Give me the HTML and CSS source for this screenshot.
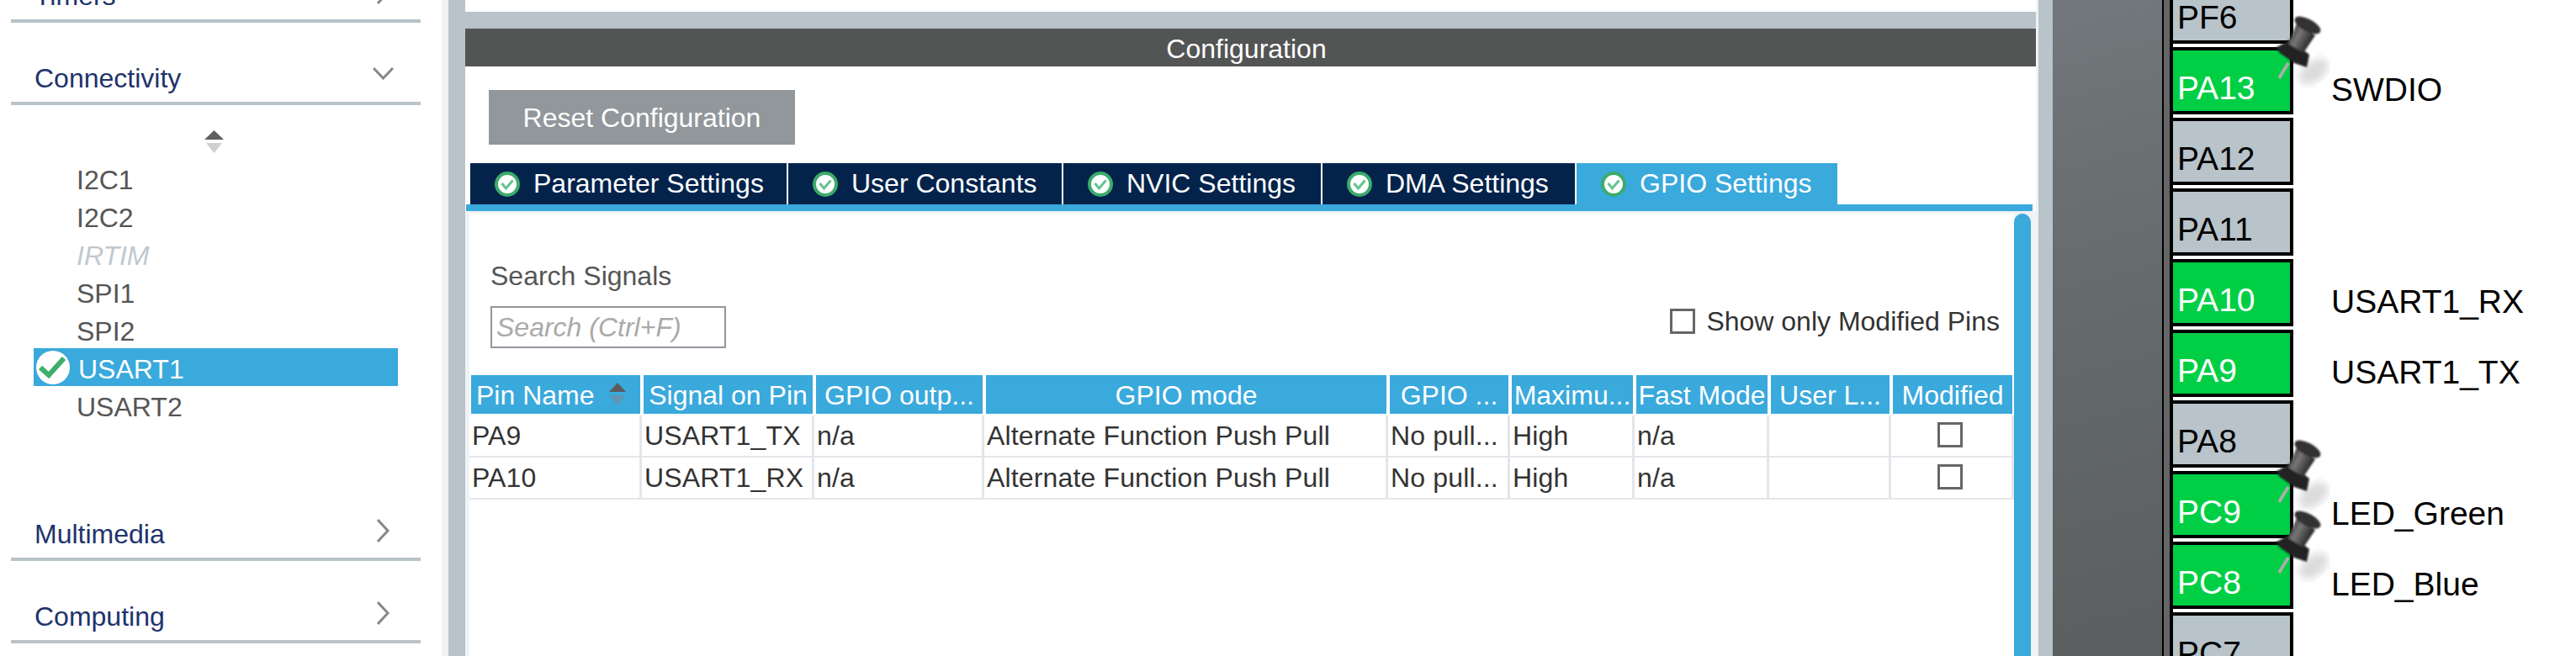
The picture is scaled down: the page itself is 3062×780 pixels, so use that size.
FILE: index.html
```html
<!DOCTYPE html>
<html lang="en">
<head>
  <meta charset="UTF-8">
  <title>Pinout and Configuration</title>
  <link rel="stylesheet" href="styles.css">
</head>
<body>
  <svg class="defs" width="0" height="0">
    <defs>
      <filter id="soft"><feGaussianBlur stdDeviation="1.3"/></filter>
      <filter id="softer"><feGaussianBlur stdDeviation="5"/></filter>
      <linearGradient id="pinShine" x1="0" y1="0" x2="1" y2="0.6">
        <stop offset="0" stop-color="#1c1c1c"/>
        <stop offset="0.45" stop-color="#777"/>
        <stop offset="1" stop-color="#161616"/>
      </linearGradient>
      <symbol id="pushpin" viewBox="0 0 70 90">
        <ellipse cx="50" cy="70" rx="20" ry="12" transform="rotate(-38 50 70)" fill="#cfcfcf" opacity="0.75" filter="url(#softer)"/>
        <path d="M20 60 L9 78" stroke="#a9aeaa" stroke-width="4"/>
        <g filter="url(#soft)">
          <path d="M5 42 L22 32 L45 50 L42 65 L27 60 L10 48 Z" fill="#232323"/>
          <path d="M30 13 L52 27 L38 48 L20 37 Z" fill="url(#pinShine)"/>
          <ellipse cx="43" cy="15" rx="17" ry="7.5" transform="rotate(28 43 15)" fill="#333"/>
        </g>
      </symbol>
      <symbol id="tabCheck" viewBox="0 0 30 30">
        <circle cx="15" cy="15" r="13" fill="#fff" stroke="#3dab6b" stroke-width="4"/>
        <path d="M8.5 14 L13.5 20 L21.5 10.5" fill="none" stroke="#63c391" stroke-width="3"/>
      </symbol>
      <symbol id="doneCheck" viewBox="0 0 40 40">
        <circle cx="20" cy="20" r="20" fill="#fff"/>
        <path d="M5 20 L15 29 L33 9" fill="none" stroke="#3fae6a" stroke-width="6"/>
      </symbol>
    </defs>
  </svg>

  <aside class="sidebar">
    <div class="section section-first"><span>Timers</span><svg class="chev-right" width="15" height="28"><path d="M1 1 L13 14 L1 27"/></svg></div>
    <div class="section"><span>Connectivity</span><svg class="chev-down" width="25" height="15"><path d="M1 1 L12.5 13 L24 1"/></svg></div>
    <svg class="sort-list" width="23" height="27">
      <polygon points="11.5,0 23,11 0,11" fill="#5f5f5f"/>
      <polygon points="2,15 21,15 11.5,27" fill="#cfcfcf"/>
    </svg>
    <ul class="periph-list">
      <li>I2C1</li>
      <li>I2C2</li>
      <li class="disabled">IRTIM</li>
      <li>SPI1</li>
      <li>SPI2</li>
      <li class="selected"><svg class="done" width="40" height="40"><use href="#doneCheck"/></svg>USART1</li>
      <li>USART2</li>
    </ul>
    <div class="section section-gap"><span>Multimedia</span><svg class="chev-right" width="15" height="28"><path d="M1 1 L13 14 L1 27"/></svg></div>
    <div class="section"><span>Computing</span><svg class="chev-right" width="15" height="28"><path d="M1 1 L13 14 L1 27"/></svg></div>
  </aside>
  <div class="gutter"></div>

  <main class="main">
    <div class="top-band"></div>
    <div class="title-bar">Configuration</div>
    <button class="reset-btn">Reset Configuration</button>

    <div class="tabs">
      <div class="tab"><svg width="30" height="30"><use href="#tabCheck"/></svg>Parameter Settings</div>
      <div class="tab"><svg width="30" height="30"><use href="#tabCheck"/></svg>User Constants</div>
      <div class="tab"><svg width="30" height="30"><use href="#tabCheck"/></svg>NVIC Settings</div>
      <div class="tab"><svg width="30" height="30"><use href="#tabCheck"/></svg>DMA Settings</div>
      <div class="tab active"><svg width="30" height="30"><use href="#tabCheck"/></svg>GPIO Settings</div>
    </div>
    <div class="tab-line"></div>

    <div class="panel">
      <div class="content">
        <div class="filters">
          <div class="search">
            <div class="search-label">Search Signals</div>
            <input class="search-input" type="text" placeholder="Search (Ctrl+F)">
          </div>
          <label class="only-modified"><span class="check"></span>Show only Modified Pins</label>
        </div>

        <table class="pin-table">
          <thead>
            <tr>
              <th class="w-pin left"><div class="th-in">Pin Name<svg class="sort-head" width="20" height="27"><polygon points="10,0 20,11 0,11" fill="#5c5c5c"/><polygon points="1,15 19,15 10,27" fill="#5f94b3"/></svg></div></th>
              <th class="w-signal">Signal on Pin</th>
              <th class="w-output">GPIO outp...</th>
              <th class="w-mode">GPIO mode</th>
              <th class="w-pull">GPIO ...</th>
              <th class="w-max">Maximu...</th>
              <th class="w-fast">Fast Mode</th>
              <th class="w-user">User L...</th>
              <th class="w-mod">Modified</th>
            </tr>
          </thead>
          <tbody>
            <tr>
              <td>PA9</td><td>USART1_TX</td><td>n/a</td><td>Alternate Function Push Pull</td><td>No pull...</td><td>High</td><td>n/a</td><td></td>
              <td class="cell-check"><span class="check"></span></td>
            </tr>
            <tr>
              <td>PA10</td><td>USART1_RX</td><td>n/a</td><td>Alternate Function Push Pull</td><td>No pull...</td><td>High</td><td>n/a</td><td></td>
              <td class="cell-check"><span class="check"></span></td>
            </tr>
          </tbody>
        </table>
      </div>
      <div class="scrollbar"></div>
    </div>
  </main>

  <div class="divider"></div>
  <div class="chip-rim"></div>
  <div class="chip">
    <div class="chip-face"></div>
    <div class="chip-edge"></div>
  </div>

  <div class="pins">
    <div class="pin-row"><div class="pin">PF6</div></div>
    <div class="pin-row"><div class="pin on">PA13</div><div class="pin-label">SWDIO</div><svg class="pushpin" width="70" height="90"><use href="#pushpin"/></svg></div>
    <div class="pin-row"><div class="pin">PA12</div></div>
    <div class="pin-row"><div class="pin">PA11</div></div>
    <div class="pin-row"><div class="pin on">PA10</div><div class="pin-label">USART1_RX</div></div>
    <div class="pin-row"><div class="pin on">PA9</div><div class="pin-label">USART1_TX</div></div>
    <div class="pin-row"><div class="pin">PA8</div></div>
    <div class="pin-row"><div class="pin on">PC9</div><div class="pin-label">LED_Green</div><svg class="pushpin" width="70" height="90"><use href="#pushpin"/></svg></div>
    <div class="pin-row"><div class="pin on">PC8</div><div class="pin-label">LED_Blue</div><svg class="pushpin" width="70" height="90"><use href="#pushpin"/></svg></div>
    <div class="pin-row"><div class="pin">PC7</div></div>
  </div>
</body>
</html>
```

FILE: styles.css
```css
* { box-sizing: border-box; }
html, body { height: 100%; }
body {
  margin: 0;
  height: 780px;
  display: flex;
  overflow: hidden;
  background: #fff;
  color: #333;
  font-family: "Liberation Sans", Arial, sans-serif;
  font-size: 32px;
}
.defs { position: absolute; }

/* left list */
.sidebar {
  width: 525px;
  flex: none;
  padding: 0 25px 0 13px;
}
.section {
  height: 98px;
  display: flex;
  justify-content: space-between;
  align-items: flex-end;
  padding: 0 0 10px 28px;
  line-height: 36px;
  color: #20336b;
  border-bottom: 4px solid #b8c3ca;
}
.section-first { margin-top: -71px; }
.section-gap { margin-top: 65px; }
.chev-right, .chev-down { fill: none; stroke: #888; stroke-width: 3; }
.chev-right { margin: 0 37px 8px 0; }
.chev-down { margin: 0 32px 16px 0; }
.sort-list { display: block; margin: 30px 0 7px 230px; }
.periph-list {
  list-style: none;
  margin: 0 0 0 27px;
  padding: 0;
  width: 433px;
  color: #555;
}
.periph-list li {
  height: 45px;
  padding: 5px 0 0 51px;
  line-height: 40px;
  display: flex;
  align-items: flex-start;
}
.periph-list .disabled { color: #c0c8ce; font-style: italic; }
.periph-list .selected {
  background: #3aa9dc;
  color: #fff;
  padding-left: 3px;
}
.done { margin: -2px 10px 0 0; flex: none; }

.gutter {
  width: 28px;
  flex: none;
  background: #b8c3ca;
  border-left: 8px solid #f0f2f5;
}

/* middle panel */
.main {
  width: 1867px;
  flex: none;
  display: flex;
  flex-direction: column;
  align-items: flex-start;
}
.top-band {
  width: 100%;
  height: 20px;
  margin-top: 14px;
  background: #b8c3ca;
}
.title-bar {
  width: 100%;
  height: 45px;
  padding: 4px 10px 0 0;
  line-height: 41px;
  text-align: center;
  color: #fff;
  background: #535554;
}
.reset-btn {
  width: 364px;
  height: 65px;
  margin: 28px 0 22px 28px;
  padding: 2px 0 0;
  border: 0;
  background: #92979c;
  color: #fff;
  font: inherit;
}
.tabs {
  display: flex;
  margin-left: 6px;
  height: 49px;
}
.tab {
  display: flex;
  align-items: center;
  gap: 16px;
  padding-left: 29px;
  margin-right: 2px;
  color: #fff;
  background: #03234b;
  line-height: 49px;
  white-space: nowrap;
}
.tab:nth-child(1) { width: 376px; }
.tab:nth-child(2) { width: 325px; }
.tab:nth-child(3) { width: 306px; }
.tab:nth-child(4) { width: 300px; }
.tab:nth-child(5) { width: 310px; }
.tab.active { background: #3aa9dc; }
.tab-line {
  width: 1862px;
  height: 8px;
  margin-left: 1px;
  background: #3aa9dc;
}
.panel {
  flex: 1;
  width: 100%;
  display: flex;
  padding: 3px 6px 0 5px;
  background: #f0f2f5;
}
.content {
  width: 1836px;
  background: #fff;
}
.scrollbar {
  width: 20px;
  background: #3aa9dc;
  border-radius: 10px 10px 0 0;
}
.filters {
  height: 192px;
  display: flex;
  justify-content: space-between;
  align-items: flex-start;
  padding: 56px 17px 0 25px;
}
.search-label { line-height: 36px; color: #555; }
.search-input {
  display: block;
  width: 280px;
  height: 50px;
  margin-top: 18px;
  padding: 0 5px;
  border: 2px solid #92979c;
  font: inherit;
  outline: none;
}
.search-input::placeholder { color: #aaa; font-style: italic; opacity: 1; }
.only-modified {
  display: flex;
  align-items: center;
  gap: 13px;
  margin-top: 57px;
  line-height: 30px;
}
.check {
  display: block;
  width: 30px;
  height: 30px;
  border: 3px solid #666;
  background: #fff;
}

/* signals table */
.pin-table {
  width: 1836px;
  table-layout: fixed;
  border-collapse: separate;
  border-spacing: 0;
}
.pin-table th {
  height: 48px;
  padding: 3px 0 0;
  font-weight: 400;
  line-height: 43px;
  white-space: nowrap;
  overflow: hidden;
  color: #fff;
  background: #3aa9dc;
  border: solid #fff;
  border-width: 0 2px 2px;
  text-align: center;
}
.w-pin, .w-signal { width: 205px; }
.w-output { width: 202px; }
.w-mode { width: 480px; }
.w-pull, .w-user { width: 145px; }
.w-max { width: 148px; }
.w-fast { width: 160px; }
.w-mod { width: 146px; }
.pin-table th.left { text-align: left; padding-left: 6px; }
.th-in { display: flex; align-items: center; justify-content: space-between; padding-right: 17px; }
.sort-head { display: block; margin-top: -5px; }
.pin-table td {
  height: 50px;
  padding: 1px 0 0 3px;
  line-height: 47px;
  letter-spacing: 0.15px;
  white-space: nowrap;
  overflow: hidden;
  vertical-align: top;
  border-right: 3px solid #e3e6ea;
  border-bottom: 2px solid #e3e6ea;
}
.pin-table .cell-check { padding: 8px 4px 0 0; }
.cell-check .check { margin: 0 auto; }

/* chip and pins */
.divider { width: 3px; flex: none; background: #f0f2f5; }
.chip-rim { width: 17px; flex: none; background: #b8c3ca; }
.chip { width: 143px; flex: none; display: flex; }
.chip-face {
  width: 130px;
  background: linear-gradient(165deg, #72787b 0%, #64696b 50%, #5a5e5f 100%);
}
.chip-edge {
  width: 13px;
  background: #666;
  border-left: 2px solid #000;
  border-right: 4px solid #000;
}
.pins {
  flex: 1;
  margin-top: -28px;
}
.pin-row {
  position: relative;
  display: flex;
  align-items: flex-end;
  height: 80px;
  margin-bottom: 4px;
  font-size: 39px;
  line-height: 40px;
  color: #000;
}
.pin {
  width: 143px;
  height: 80px;
  display: flex;
  align-items: flex-end;
  padding: 0 0 7px 5px;
  background: #b8c3ca;
  border: solid #000;
  border-width: 4px 4px 4px 0;
}
.pin.on { background: #00ce45; color: #fff; }
.pin-label { margin-left: 45px; padding-bottom: 9px; }
.pushpin { position: absolute; left: 117px; top: -41px; z-index: 2; }
```
